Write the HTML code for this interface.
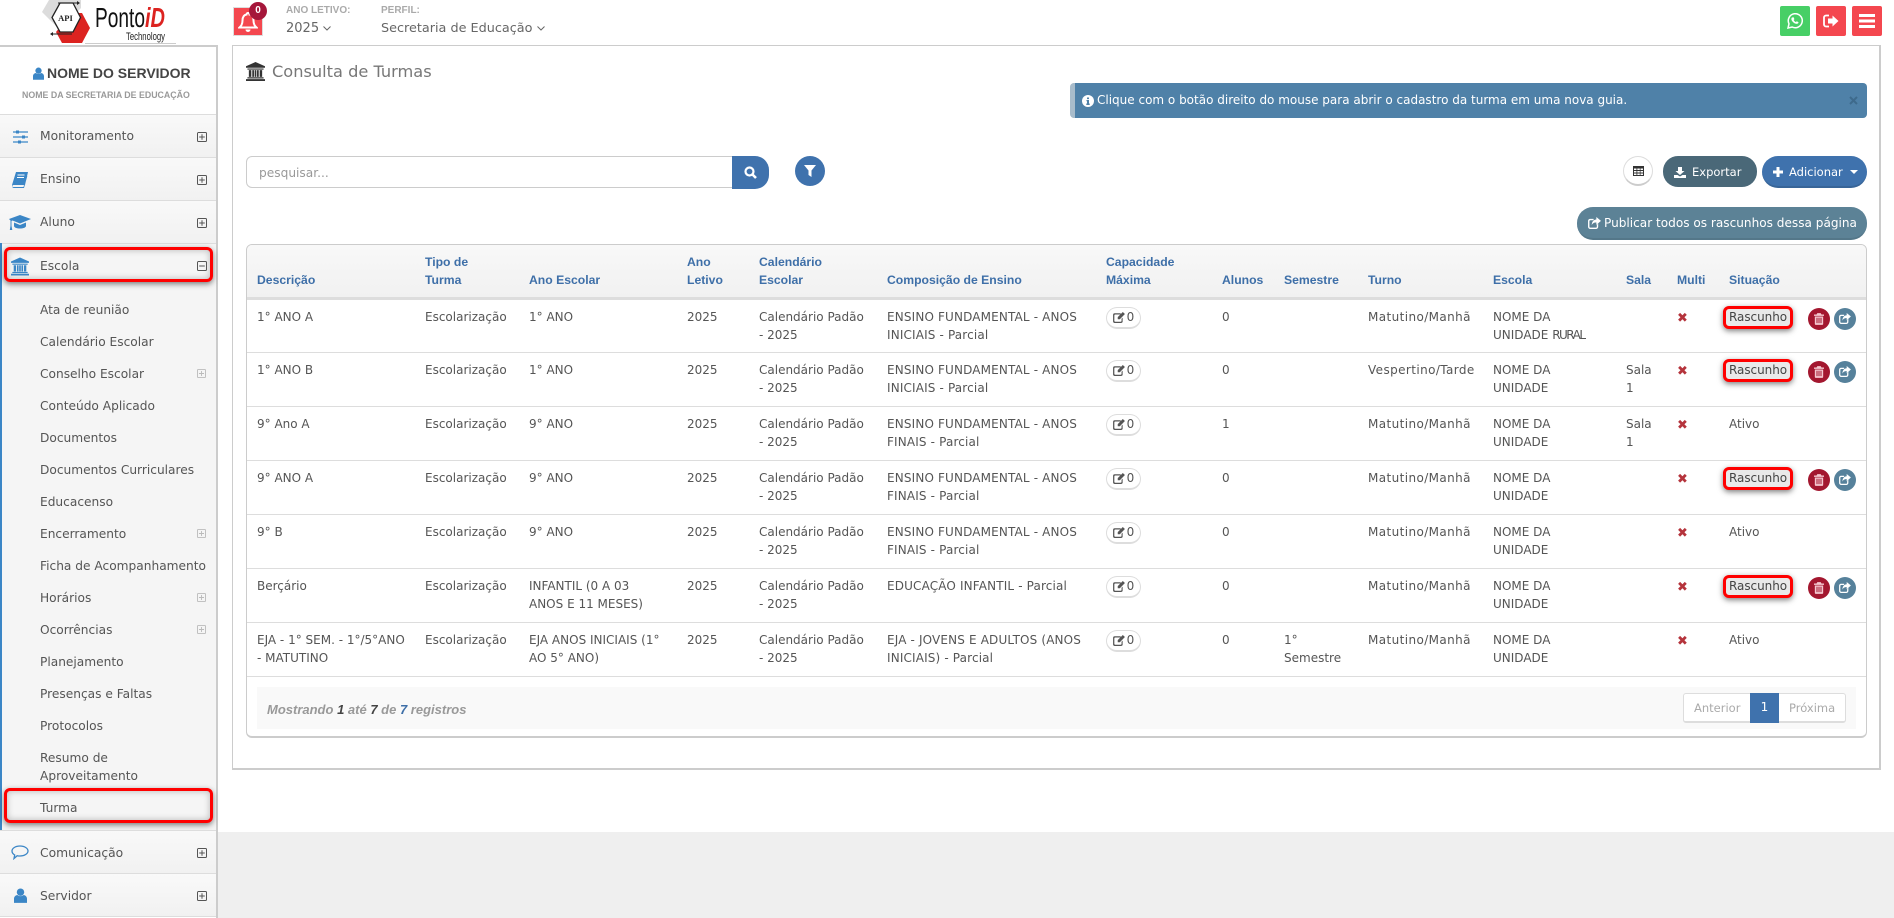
<!DOCTYPE html>
<html lang="pt-BR"><head><meta charset="utf-8"><title>Consulta de Turmas</title>
<style>
*{box-sizing:border-box}
html,body{margin:0;padding:0;width:1894px;height:918px;overflow:hidden;background:#fff;color:#555;font-family:"DejaVu Sans","Liberation Sans",sans-serif;font-size:12px}
.a{position:absolute}
.t{position:absolute;line-height:18px;white-space:nowrap}
svg{display:block}
#bgb{left:218px;top:832px;width:1676px;height:86px;background:#efefef}
#side{left:0;top:45px;width:218px;height:873px;background:#fff;border-top:2px solid #ccc;border-right:2px solid #ccc}
.mi{position:absolute;left:0;width:216px;height:43px;background:linear-gradient(#f9f9f9,#f1f1f1);border-top:1px solid #ddd;}
.ml{position:absolute;left:40px;line-height:18px;color:#555;white-space:nowrap;font-size:12.3px}
.sl{position:absolute;left:40px;line-height:18px;color:#555;white-space:nowrap;font-size:12.2px}
.hl{position:absolute;border:3px solid #f00;border-radius:6px;box-shadow:0 2px 6px rgba(0,0,0,.5),inset 0 0 7px rgba(0,0,0,.25)}
#pbox{left:232px;top:45px;width:1649px;height:725px;border:2px solid #ccc;border-width:1px 2px 2px 1px;background:#fff}
#card{left:246px;top:244px;width:1621px;height:494px;border:1px solid #ccc;border-width:1px 1px 2px 1px;border-radius:6px;overflow:hidden;background:#fff}
table{border-collapse:collapse;table-layout:fixed;width:1619px;position:absolute;left:0;top:0}
th{font:bold 12.2px/18px "Liberation Sans",sans-serif;color:#3e6fa8;text-align:left;vertical-align:bottom;padding:0 0 8px 0;height:53px;border-bottom:3px solid #ddd;background:linear-gradient(#f8f8f8,#f1f1f1)}
td{vertical-align:top;padding:8px 0 0 0;height:54px;line-height:18px;border-bottom:1px solid #ddd;color:#555;white-space:nowrap;font-size:12px;position:relative}
th:first-child,td:first-child{padding-left:10px}
td:nth-child(6){letter-spacing:.15px}
td:nth-child(10){letter-spacing:.4px}
.cap{position:absolute;left:0;top:7px;width:35px;height:22px;border:1px solid #ddd;border-bottom:2px solid #ddd;border-radius:11px;background:#fff;display:flex;align-items:center;justify-content:center;gap:2px;font-size:12px}
td.x{color:#b5343c;font-size:13px;font-weight:bold;padding-top:10px}
.rr{position:absolute;left:-6px;top:6px;width:70px;height:23px;border:3px solid #f00;border-radius:6px;background:#e9e9e9;box-shadow:0 2px 6px rgba(0,0,0,.5);line-height:16px;padding-left:3px;font-size:12px;color:#444;letter-spacing:-.05px}
.ct{position:absolute;top:8px;width:22px;height:22px;border-radius:50%;display:flex;align-items:center;justify-content:center}
.del{left:79px;background:#a3172f}.shr{left:105px;background:#56819b}
.btn{position:absolute;color:#fff;display:flex;align-items:center;white-space:nowrap}
.rl{letter-spacing:-1.5px}
</style></head><body>
<svg width="0" height="0" style="position:absolute"><defs>
<symbol id="bank" viewBox="0 0 20 20"><path d="M10 0L0 4.5V6h20V4.5zM1.5 6.8h17v1.2h-17zM3 8.6h2.6v7H3zM6.6 8.6h1.8v7H6.6zM9.1 8.6h1.8v7H9.1zM11.6 8.6h1.8v7h-1.8zM14.4 8.6H17v7h-2.6zM1.5 16h17v1.4h-17zM0 18h20v2H0z"/></symbol>
<symbol id="plus" viewBox="0 0 10 10"><path d="M1.5.5h7a1 1 0 0 1 1 1v7a1 1 0 0 1-1 1h-7a1 1 0 0 1-1-1v-7a1 1 0 0 1 1-1zM2.2 5h5.6M5 2.2v5.6" fill="none" stroke="currentColor" stroke-width="1"/></symbol>
<symbol id="minus" viewBox="0 0 10 10"><path d="M1.5.5h7a1 1 0 0 1 1 1v7a1 1 0 0 1-1 1h-7a1 1 0 0 1-1-1v-7a1 1 0 0 1 1-1zM2.2 5h5.6" fill="none" stroke="currentColor" stroke-width="1"/></symbol>
<symbol id="user" viewBox="0 0 14 16"><circle cx="7" cy="4.4" r="4"/><path d="M0 16v-4.5C0 9 2 7.6 3.6 7.4 4.6 8.2 5.7 8.7 7 8.7s2.4-.5 3.4-1.3c1.6.2 3.6 1.6 3.6 4.1V16z"/></symbol>
<symbol id="trash" viewBox="0 0 12 14"><path d="M4 0h4l1 1.6h3v1.6H0V1.6h3zM1 4h10v9a1 1 0 0 1-1 1H2a1 1 0 0 1-1-1zM3 5.5v6.5h1.2V5.5zM5.4 5.5v6.5h1.2V5.5zM7.8 5.5v6.5H9V5.5z" fill-rule="evenodd"/></symbol>
<symbol id="share" viewBox="0 0 14 13"><path d="M2 2h4v1.5H2.5a1 1 0 0 0-1 1v6a1 1 0 0 0 1 1h6a1 1 0 0 0 1-1V8.5L11 7v3.5A2.5 2.5 0 0 1 8.5 13h-6A2.5 2.5 0 0 1 0 10.500v-6A2.500 2.500 0 0 1 2 2zM9 0l5 4.200-5 4.300V6C6 6 4.800 7 4 9c0-4 2-6 5-6.300z"/></symbol>
<symbol id="edit" viewBox="0 0 14 13"><path d="M2 1.500h7V3H2.500a1 1 0 0 0-1 1v6.500a1 1 0 0 0 1 1H9a1 1 0 0 0 1-1V8l1.300-1.300v4A2 2 0 0 1 9.500 13H2a2 2 0 0 1-2-2V3.500a2 2 0 0 1 2-2zM11.500 0L14 2.400 8 8.500H5.500V6z"/></symbol>
</defs></svg>

<div class="a" id="bgb"></div>

<!-- logo -->
<svg class="a" style="left:36px;top:0" width="145" height="46" viewBox="36 0 145 46">
<path d="M42 12l7-12h32v8L60 30z" fill="#dcdcdc"/>
<path d="M71 13h11l8 15-8 15H62l-6-11z" fill="#dc2320"/>
<path d="M60 3h13l7.500 14.500L73 32H60l-8-14.500z" fill="#fff" stroke="#222" stroke-width="1.300"/>
<path d="M58 3H78M52 34H72" stroke="#222" stroke-width="1"/>
<path d="M80 3l-3-2v4zM50 34l3-2v4z" fill="#222"/>
<text x="65.500" y="21" font-family="Liberation Serif" font-size="8.500" font-weight="bold" fill="#222" text-anchor="middle">API</text>
<text x="95" y="27" font-family="Liberation Sans" font-size="28" fill="#111" textLength="50" lengthAdjust="spacingAndGlyphs">Ponto</text>
<text x="145" y="27" font-family="Liberation Sans" font-size="28" font-style="italic" font-weight="bold" fill="#dc2320" textLength="20" lengthAdjust="spacingAndGlyphs">iD</text>
<text x="126" y="40" font-family="Liberation Sans" font-size="11" fill="#222" textLength="39" lengthAdjust="spacingAndGlyphs">Technology</text>
<rect x="85" y="43" width="91" height="1" fill="#ccc"/>
</svg>

<!-- top bar -->
<div class="a" style="left:233px;top:7px;width:30px;height:29px;background:#f4474f;border:1px solid #ddd"></div>
<svg class="a" style="left:238px;top:12px" width="20" height="21" viewBox="0 0 20 21"><path d="M10 1a1.500 1.500 0 0 1 1.500 1.500c3 .6 4 3 4 6 0 4 1.500 5.500 3 7H1.500c1.500-1.500 3-3 3-7 0-3 1-5.400 4-6A1.500 1.500 0 0 1 10 1z" fill="none" stroke="#fff" stroke-width="2"/><path d="M7.500 17.500a2.500 2.500 0 0 0 5 0z" fill="#fff"/></svg>
<div class="a" style="left:249px;top:2px;width:18px;height:18px;border-radius:50%;background:#a5163a;color:#fff;font:bold 10px/18px 'Liberation Sans',sans-serif;text-align:center">0</div>
<div class="t" style="left:286px;top:2px;font:bold 10px/18px 'Liberation Sans',sans-serif;color:#aaa">ANO LETIVO:</div>
<div class="t" style="left:286px;top:19.500px;font-size:13px;color:#666">2025</div>
<svg class="a" style="left:323px;top:26px" width="8" height="5"><path d="M.5.500L4 4 7.500.500" fill="none" stroke="#666"/></svg>
<div class="t" style="left:381px;top:2px;font:bold 10px/18px 'Liberation Sans',sans-serif;color:#aaa">PERFIL:</div>
<div class="t" style="left:381px;top:19.500px;font-size:12.800px;color:#666">Secretaria de Educação</div>
<svg class="a" style="left:537px;top:26px" width="8" height="5"><path d="M.5.500L4 4 7.500.500" fill="none" stroke="#666"/></svg>

<div class="a" style="left:1780px;top:6px;width:30px;height:30px;background:#47cf66;border-radius:2px"></div>
<svg class="a" style="left:1787px;top:13px" width="16" height="16" viewBox="0 0 16 16"><path d="M1 15l1-4.200A7 7 0 1 1 5.200 14z" fill="none" stroke="#fff" stroke-width="1.500"/><path d="M5 4.500c-1 1 -.8 2.500.5 4 1.400 1.700 3 2.500 4.500 2.300 1-.2 1.500-.9 1.500-1.600L9.800 8.300l-.9.800C8 8.800 7 7.800 6.700 7l.7-.9-.8-1.800z" fill="#fff"/></svg>
<div class="a" style="left:1816px;top:6px;width:30px;height:30px;background:#f4474f;border-radius:2px"></div>
<svg class="a" style="left:1823px;top:14px" width="16" height="14" viewBox="0 0 16 14"><path d="M6 1.500H3a2 2 0 0 0-2 2v7a2 2 0 0 0 2 2h3" fill="none" stroke="#fff" stroke-width="1.800"/><path d="M5 4.500h4.500V1.500L15.500 7l-6 5.500v-3H5z" fill="#fff"/></svg>
<div class="a" style="left:1852px;top:6px;width:30px;height:30px;background:#f4474f;border-radius:2px"></div>
<svg class="a" style="left:1859px;top:14px" width="16" height="14" viewBox="0 0 16 14"><path d="M0 0h16v3H0zM0 5.500h16v3H0zM0 11h16v3H0z" fill="#fff"/></svg>

<!-- sidebar -->
<div class="a" id="side">
<svg class="a" style="left:33px;top:20px" width="11" height="13" fill="#3b86c6"><use href="#user"/></svg>
<div class="t" style="left:47px;top:17px;font:bold 14px/18px 'Liberation Sans',sans-serif;color:#444">NOME DO SERVIDOR</div>
<div class="t" style="left:22px;top:39px;font:bold 8.800px/18px 'Liberation Sans',sans-serif;color:#999">NOME DA SECRETARIA DE EDUCAÇÃO</div>

<div class="mi" style="top:67px"><div class="ml" style="top:12px">Monitoramento</div><svg class="a" style="left:197px;top:17px;color:#555" width="10" height="10"><use href="#plus"/></svg></div>
<div class="mi" style="top:110px"><div class="ml" style="top:12px">Ensino</div><svg class="a" style="left:197px;top:17px;color:#555" width="10" height="10"><use href="#plus"/></svg></div>
<div class="mi" style="top:153px"><div class="ml" style="top:12px">Aluno</div><svg class="a" style="left:197px;top:17px;color:#555" width="10" height="10"><use href="#plus"/></svg></div>
<div class="mi" style="top:196px;height:588px;background:#f5f5f5"></div>
<div class="a" style="left:0;top:196px;width:2px;height:588px;background:#3b86c6"></div>

<svg class="a" style="left:13px;top:83px" width="15" height="14" viewBox="0 0 15 14"><path d="M0 2h15M0 7h15M0 12h15" stroke="#3b86c6" stroke-width="1.200"/><path d="M3 .5h3v3H3zM9 5.500h3v3H9zM5 10.500h3v3H5z" fill="#3b86c6"/></svg>
<svg class="a" style="left:12px;top:125px" width="16" height="16" viewBox="0 0 16 16"><path d="M4 0h12l-3 13H1.500C.500 13 0 14 .5 15h11l3-11.500.8.600L12 16H2C.500 16-.300 14.500 0 13z" fill="#3b86c6"/><path d="M5.500 3h7M5 5.500h7" stroke="#fff" stroke-width="1"/></svg>
<svg class="a" style="left:9px;top:168px" width="22" height="16" viewBox="0 0 22 16"><path d="M11 0l11 4-11 4.500L3.500 5.500 2.500 6v5l.8 4H.8L1.500 11V5.500L0 4z" fill="#3b86c6"/><path d="M5 7.500l6 2.500 6-2.500V11c0 1.500-3 2.500-6 2.500S5 12.500 5 11z" fill="#3b86c6"/></svg>

<div class="sl" style="top:253.500px">Ata de reunião</div>
<div class="sl" style="top:285.500px">Calendário Escolar</div>
<div class="sl" style="top:317.500px">Conselho Escolar</div>
<div class="sl" style="top:349.500px">Conteúdo Aplicado</div>
<div class="sl" style="top:381.500px">Documentos</div>
<div class="sl" style="top:413.500px">Documentos Curriculares</div>
<div class="sl" style="top:445.500px">Educacenso</div>
<div class="sl" style="top:477.500px">Encerramento</div>
<div class="sl" style="top:509.500px">Ficha de Acompanhamento</div>
<div class="sl" style="top:541.500px">Horários</div>
<div class="sl" style="top:573.500px">Ocorrências</div>
<div class="sl" style="top:605.500px">Planejamento</div>
<div class="sl" style="top:637.500px">Presenças e Faltas</div>
<div class="sl" style="top:669.500px">Protocolos</div>
<div class="sl" style="top:701.500px">Resumo de<br>Aproveitamento</div>
<div class="sl" style="top:751.500px">Turma</div>
<svg class="a" style="left:197px;top:321.500px;color:#bbb" width="9" height="9"><use href="#plus"/></svg>
<svg class="a" style="left:197px;top:481.500px;color:#bbb" width="9" height="9"><use href="#plus"/></svg>
<svg class="a" style="left:197px;top:545.500px;color:#bbb" width="9" height="9"><use href="#plus"/></svg>
<svg class="a" style="left:197px;top:577.500px;color:#bbb" width="9" height="9"><use href="#plus"/></svg>

<div class="hl" style="left:4px;top:200px;width:209px;height:35px"></div>
<svg class="a" style="left:11px;top:210px;fill:#3b86c6" width="18" height="19"><use href="#bank"/></svg>
<div class="ml" style="top:209.500px">Escola</div>
<svg class="a" style="left:197px;top:214px;color:#555" width="10" height="10"><use href="#minus"/></svg>
<div class="hl" style="left:4px;top:741px;width:209px;height:35px"></div>

<div class="mi" style="top:783px"><div class="ml" style="top:12.500px">Comunicação</div><svg class="a" style="left:197px;top:17px;color:#555" width="10" height="10"><use href="#plus"/></svg>
<svg class="a" style="left:11px;top:14px" width="18" height="15" viewBox="0 0 18 15"><path d="M9 1c4.500 0 8 2.300 8 5s-3.500 5-8 5c-1 0-2-.1-2.800-.3L3 13.500 3.700 10C2 9 1 7.600 1 6c0-2.700 3.500-5 8-5z" fill="none" stroke="#3b86c6" stroke-width="1.300"/></svg></div>
<div class="mi" style="top:826px;height:44px;border-bottom:1px solid #ddd"><div class="ml" style="top:12.500px">Servidor</div><svg class="a" style="left:197px;top:17px;color:#555" width="10" height="10"><use href="#plus"/></svg>
<svg class="a" style="left:14px;top:14px;fill:#3b86c6" width="13" height="15"><use href="#user"/></svg></div>
</div>

<!-- panel -->
<div class="a" id="pbox"></div>
<svg class="a" style="left:246px;top:62px;fill:#333" width="19" height="19"><use href="#bank"/></svg>
<div class="t" style="left:272px;top:63px;font-size:16.200px;color:#777">Consulta de Turmas</div>

<div class="a" style="left:1070px;top:83px;width:797px;height:35px;background:#4f81a8;border-radius:4px;border-left:5px solid #a8bccb"></div>
<svg class="a" style="left:1082px;top:95px" width="12" height="12" viewBox="0 0 12 12"><circle cx="6" cy="6" r="6" fill="#fff"/><path d="M5 2.500h2v1.600H5zM4.500 5h2.500v3.500h.7V10H4.300V8.500H5V6.300h-.5z" fill="#4f81a8"/></svg>
<div class="t" style="left:1097px;top:91px;color:#fff;font-size:12px">Clique com o botão direito do mouse para abrir o cadastro da turma em uma nova guia.</div>
<svg class="a" style="left:1849px;top:96px" width="9" height="9"><path d="M1 1l7 7M8 1L1 8" stroke="#3e6a8c" stroke-width="2"/></svg>

<div class="a" style="left:246px;top:156px;width:487px;height:32px;border:1px solid #ccc;border-radius:6px 0 0 6px;background:#fff"></div>
<div class="t" style="left:259px;top:164px;color:#999;font-size:12.200px">pesquisar...</div>
<div class="a" style="left:732px;top:156px;width:37px;height:33px;background:#3f72ad;border-radius:0 14px 14px 0"></div>
<svg class="a" style="left:744px;top:166px" width="13" height="13" viewBox="0 0 13 13"><circle cx="5.500" cy="5.500" r="4" fill="none" stroke="#fff" stroke-width="2.200"/><path d="M8.500 8.500l3.500 3.500" stroke="#fff" stroke-width="2.600"/></svg>
<div class="a" style="left:795px;top:156px;width:30px;height:30px;background:#3f72ad;border-radius:50%"></div>
<svg class="a" style="left:804px;top:165px" width="12" height="12" viewBox="0 0 12 12"><path d="M0 0h12L7.500 5.500V12L4.500 10V5.500z" fill="#fff"/></svg>

<div class="a" style="left:1623px;top:156px;width:30px;height:30px;border:1px solid #ddd;border-bottom:2px solid #ccc;border-radius:50%;background:#fff"></div>
<svg class="a" style="left:1633px;top:166px" width="11" height="10" viewBox="0 0 11 10"><path d="M0 0h11v10H0z" fill="#333"/><path d="M1 2.500h2.500v1.500H1zM4.300 2.500h2.500v1.500H4.300zM7.500 2.500H10v1.500H7.500zM1 5h2.500v1.500H1zM4.300 5h2.500v1.500H4.300zM7.500 5H10v1.500H7.500zM1 7.500h2.500V9H1zM4.300 7.500h2.500V9H4.300zM7.500 7.500H10V9H7.500z" fill="#fff"/></svg>

<div class="btn" style="left:1663px;top:156px;width:94px;height:31px;background:#4a6878;border-radius:15px;font-size:11.500px;padding-left:11px;gap:6px;padding-top:1px"><svg width="12" height="11" viewBox="0 0 12 11"><path d="M4 0h4v4h2.500L6 8 1.500 4H4z M0 8h3.500L6 9.500 8.500 8H12v3H0z" fill="#fff"/></svg>Exportar</div>
<div class="btn" style="left:1762px;top:156px;width:105px;height:32px;background:#3f72ad;border-bottom:2px solid #386598;border-radius:16px;font-size:11.500px;padding-left:11px;gap:6px;padding-top:1px"><svg width="10" height="10" viewBox="0 0 10 10"><path d="M3.500 0h3v3.500H10v3H6.500V10h-3V6.500H0v-3h3.500z" fill="#fff"/></svg>Adicionar<svg width="8" height="4" style="margin-left:1px"><path d="M0 0h8L4 4z" fill="#fff"/></svg></div>
<div class="btn" style="left:1577px;top:207px;width:290px;height:33px;background:#5c8296;border-bottom:2px solid #547789;border-radius:16px;font-size:12.100px;padding-left:11px;gap:3px"><svg width="13" height="12" fill="#fff"><use href="#share"/></svg>Publicar todos os rascunhos dessa página</div>

<!-- table card -->
<div class="a" id="card">
<table>
<colgroup><col style="width:178px"><col style="width:104px"><col style="width:158px"><col style="width:72px"><col style="width:128px"><col style="width:219px"><col style="width:116px"><col style="width:62px"><col style="width:84px"><col style="width:125px"><col style="width:133px"><col style="width:51px"><col style="width:52px"><col style="width:137px"></colgroup>
<thead><tr><th>Descrição</th><th>Tipo de<br>Turma</th><th>Ano Escolar</th><th>Ano<br>Letivo</th><th>Calendário<br>Escolar</th><th>Composição de Ensino</th><th>Capacidade<br>Máxima</th><th>Alunos</th><th>Semestre</th><th>Turno</th><th>Escola</th><th>Sala</th><th>Multi</th><th>Situação</th></tr></thead>
<tbody>
<tr><td>1° ANO A</td><td>Escolarização</td><td>1° ANO</td><td>2025</td><td>Calendário Padão<br>- 2025</td><td>ENSINO FUNDAMENTAL - ANOS<br>INICIAIS - Parcial</td><td><div class="cap"><svg width="12" height="11" fill="#555"><use href="#edit"/></svg>0</div></td><td>0</td><td></td><td>Matutino/Manhã</td><td>NOME DA<br>UNIDADE <span class="rl">RURAL</span></td><td></td><td class="x">✖</td><td><div class="rr">Rascunho</div><div class="ct del"><svg width="10" height="12" fill="#f4c7cf"><use href="#trash"/></svg></div><div class="ct shr"><svg width="12" height="11" fill="#fff"><use href="#share"/></svg></div></td></tr>
<tr><td>1° ANO B</td><td>Escolarização</td><td>1° ANO</td><td>2025</td><td>Calendário Padão<br>- 2025</td><td>ENSINO FUNDAMENTAL - ANOS<br>INICIAIS - Parcial</td><td><div class="cap"><svg width="12" height="11" fill="#555"><use href="#edit"/></svg>0</div></td><td>0</td><td></td><td>Vespertino/Tarde</td><td>NOME DA<br>UNIDADE</td><td>Sala<br>1</td><td class="x">✖</td><td><div class="rr">Rascunho</div><div class="ct del"><svg width="10" height="12" fill="#f4c7cf"><use href="#trash"/></svg></div><div class="ct shr"><svg width="12" height="11" fill="#fff"><use href="#share"/></svg></div></td></tr>
<tr><td>9° Ano A</td><td>Escolarização</td><td>9° ANO</td><td>2025</td><td>Calendário Padão<br>- 2025</td><td>ENSINO FUNDAMENTAL - ANOS<br>FINAIS - Parcial</td><td><div class="cap"><svg width="12" height="11" fill="#555"><use href="#edit"/></svg>0</div></td><td>1</td><td></td><td>Matutino/Manhã</td><td>NOME DA<br>UNIDADE</td><td>Sala<br>1</td><td class="x">✖</td><td>Ativo</td></tr>
<tr><td>9° ANO A</td><td>Escolarização</td><td>9° ANO</td><td>2025</td><td>Calendário Padão<br>- 2025</td><td>ENSINO FUNDAMENTAL - ANOS<br>FINAIS - Parcial</td><td><div class="cap"><svg width="12" height="11" fill="#555"><use href="#edit"/></svg>0</div></td><td>0</td><td></td><td>Matutino/Manhã</td><td>NOME DA<br>UNIDADE</td><td></td><td class="x">✖</td><td><div class="rr">Rascunho</div><div class="ct del"><svg width="10" height="12" fill="#f4c7cf"><use href="#trash"/></svg></div><div class="ct shr"><svg width="12" height="11" fill="#fff"><use href="#share"/></svg></div></td></tr>
<tr><td>9° B</td><td>Escolarização</td><td>9° ANO</td><td>2025</td><td>Calendário Padão<br>- 2025</td><td>ENSINO FUNDAMENTAL - ANOS<br>FINAIS - Parcial</td><td><div class="cap"><svg width="12" height="11" fill="#555"><use href="#edit"/></svg>0</div></td><td>0</td><td></td><td>Matutino/Manhã</td><td>NOME DA<br>UNIDADE</td><td></td><td class="x">✖</td><td>Ativo</td></tr>
<tr><td>Berçário</td><td>Escolarização</td><td>INFANTIL (0 A 03<br>ANOS E 11 MESES)</td><td>2025</td><td>Calendário Padão<br>- 2025</td><td>EDUCAÇÃO INFANTIL - Parcial</td><td><div class="cap"><svg width="12" height="11" fill="#555"><use href="#edit"/></svg>0</div></td><td>0</td><td></td><td>Matutino/Manhã</td><td>NOME DA<br>UNIDADE</td><td></td><td class="x">✖</td><td><div class="rr">Rascunho</div><div class="ct del"><svg width="10" height="12" fill="#f4c7cf"><use href="#trash"/></svg></div><div class="ct shr"><svg width="12" height="11" fill="#fff"><use href="#share"/></svg></div></td></tr>
<tr><td>EJA - 1° SEM. - 1°/5°ANO<br>- MATUTINO</td><td>Escolarização</td><td>EJA ANOS INICIAIS (1°<br>AO 5° ANO)</td><td>2025</td><td>Calendário Padão<br>- 2025</td><td>EJA - JOVENS E ADULTOS (ANOS<br>INICIAIS) - Parcial</td><td><div class="cap"><svg width="12" height="11" fill="#555"><use href="#edit"/></svg>0</div></td><td>0</td><td>1°<br>Semestre</td><td>Matutino/Manhã</td><td>NOME DA<br>UNIDADE</td><td></td><td class="x">✖</td><td>Ativo</td></tr>
</tbody></table>
<div class="a" style="left:10px;top:442px;width:1599px;height:42px;background:#f9f9f9"></div>
<div class="t" style="left:20px;top:456px;font:italic bold 13px/18px 'Liberation Sans',sans-serif;color:#999">Mostrando <span style="color:#444">1</span> até <span style="color:#444">7</span> de <span style="color:#3e6fa8">7</span> registros</div>
<div class="a" style="left:1436px;top:448px;width:163px;height:30px;border:1px solid #ddd;border-bottom:2px solid #ddd;border-radius:3px;background:#fff"></div>
<div class="t" style="left:1447px;top:454px;color:#aaa;font-size:11.500px">Anterior</div>
<div class="a" style="left:1503px;top:448px;width:29px;height:30px;background:#3f72ad;color:#fff;text-align:center;line-height:29px;font-size:12px">1</div>
<div class="t" style="left:1542px;top:454px;color:#aaa;font-size:11.500px">Próxima</div>
</div>
</body></html>
